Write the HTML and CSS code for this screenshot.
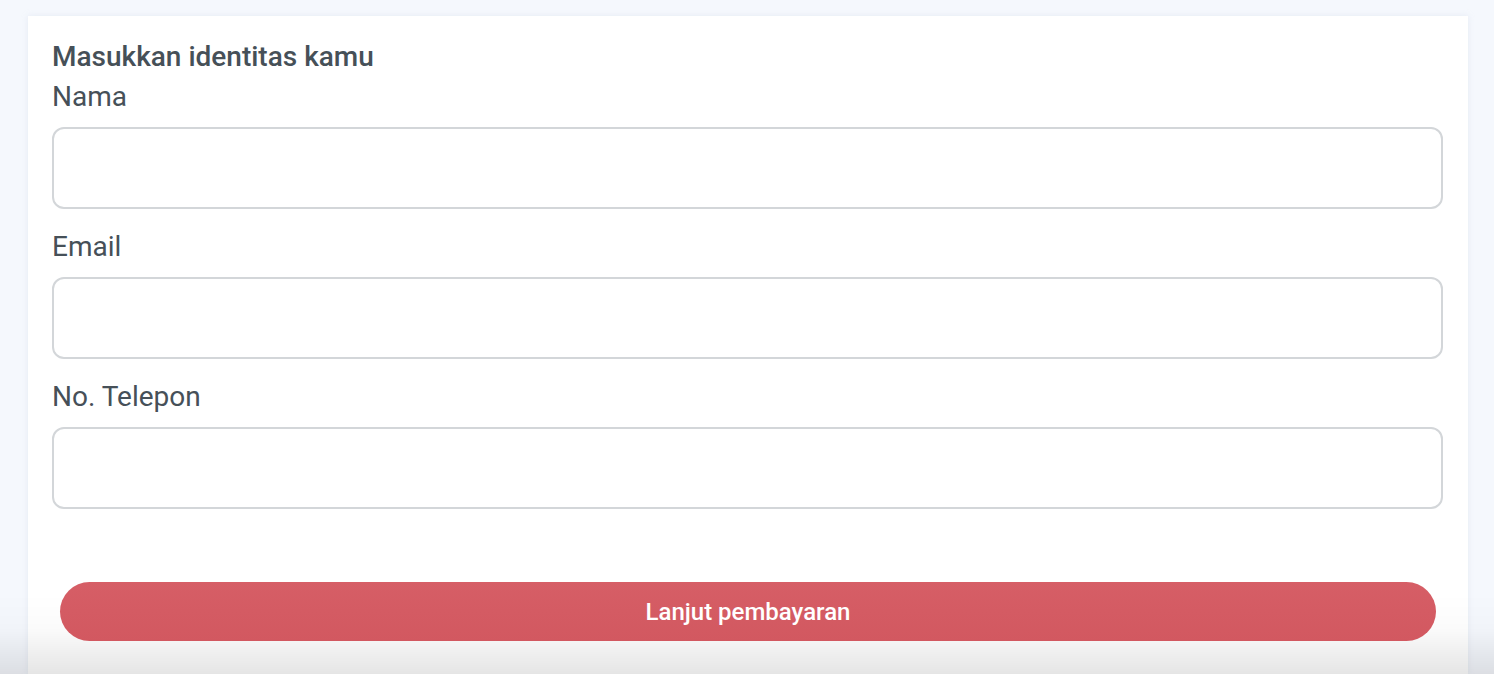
FILE: index.html
```html
<!DOCTYPE html>
<html lang="id">
<head>
  <meta charset="UTF-8">
  <title>Identitas</title>
  <link rel="stylesheet" href="styles.css">
</head>
<body>
  <div class="card">
    <h3 class="title">Masukkan identitas kamu</h3>

    <label class="label" for="nama">Nama</label>
    <input class="field" type="text" id="nama">

    <label class="label" for="email">Email</label>
    <input class="field" type="email" id="email">

    <label class="label" for="telepon">No. Telepon</label>
    <input class="field" type="tel" id="telepon">
  </div>

  <!-- Bottom bar -->
  <div class="footer">
    <button class="pay-btn">Lanjut pembayaran</button>
  </div>
</body>
</html>
```

FILE: styles.css
```css
html, body { height: 100%; }
body {
  margin: 0;
  background: #f5f8fd;
  font-family: Roboto, "Liberation Sans", sans-serif;
  color: #465058;
  overflow: hidden;
}

.card {
  box-sizing: border-box;
  height: calc(100% - 16px);
  margin: 16px 26px 0 28px;
  background: #fff;
  padding: 21px 25px 0 24px;
  box-shadow: 0 0 6px rgba(200, 210, 225, 0.35);
}

.title {
  margin: 0;
  font-size: 28px;
  font-weight: 500;
  line-height: 40px;
}

.label {
  display: block;
  font-size: 28px;
  line-height: 40px;
  margin-bottom: 10px;
}

.field {
  display: block;
  box-sizing: border-box;
  width: 100%;
  height: 82px;
  margin: 0 0 18px;
  border: 2px solid #d3d6d9;
  border-radius: 12px;
  background: #fff;
  font: inherit;
  padding: 0 16px;
  outline: none;
}

.footer {
  position: fixed;
  left: 0;
  right: 0;
  bottom: 0;
  height: 114px;
  padding: 22px 58px 0 60px;
  box-sizing: border-box;
  background: linear-gradient(to bottom, rgba(255,255,255,0) 0%, rgba(255,255,255,0) 30%, rgba(0,0,0,0.015) 60%, rgba(0,0,0,0.1) 100%);
}

.pay-btn {
  display: block;
  width: 100%;
  height: 59px;
  border: 0;
  border-radius: 30px;
  background: linear-gradient(to bottom, #d65e66, #d25860);
  color: #fff;
  font-family: inherit;
  font-size: 24px;
  font-weight: 500;
  cursor: pointer;
}
```
